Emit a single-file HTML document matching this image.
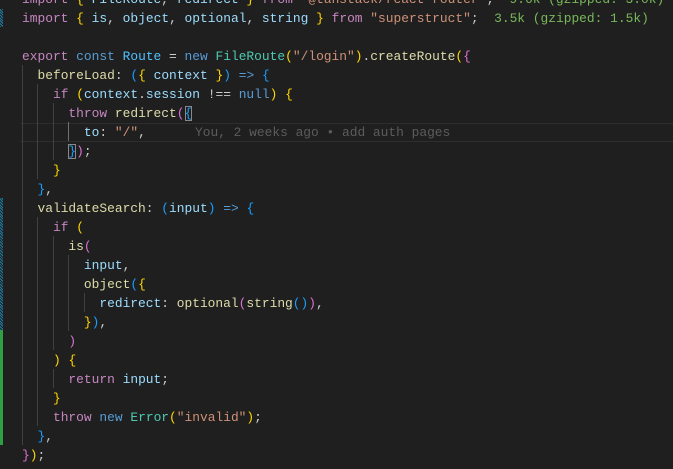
<!DOCTYPE html>
<html><head><meta charset="utf-8"><style>
html,body{margin:0;padding:0;background:#1f1f1f;width:673px;height:469px;overflow:hidden;position:relative}
.c{position:absolute;left:22px;top:-10.5px;font-family:"Liberation Mono",monospace;font-size:12.9px;line-height:19px;color:#cccccc;white-space:pre}
.k{color:#c586c0}.b{color:#569cd6}.t{color:#4ec9b0}.s{color:#ce9178}.f{color:#dcdcaa}.v{color:#9cdcfe}.cv{color:#4fc1ff}
.g1{color:#ffd700}.g2{color:#da70d6}.g3{color:#179fff}.ic{color:#78b85a}.bl{color:#5c5c5c}
.gd{position:absolute;width:1px;background:#404040}
.box{outline:1px solid #888;outline-offset:-1px}
</style></head><body>
<div style="position:absolute;left:20px;right:0;top:123px;height:17px;border-top:1px solid #2e2e2e;border-bottom:1px solid #2e2e2e"></div>
<div style="position:absolute;left:0;width:3px;top:9px;height:18px;background:repeating-linear-gradient(45deg,#1b81a8 0 1px,#1f1f1f 1px 2px)"></div>
<div style="position:absolute;left:0;width:3px;top:198px;height:132px;background:repeating-linear-gradient(45deg,#1b81a8 0 1px,#1f1f1f 1px 2px)"></div>
<div style="position:absolute;left:0;width:3px;top:330px;height:115px;background:#2ea043"></div>
<div class="gd" style="left:22px;top:65px;height:380px"></div>
<div class="gd" style="left:37px;top:84px;height:95px"></div>
<div class="gd" style="left:37px;top:217px;height:209px"></div>
<div class="gd" style="left:53px;top:103px;height:57px"></div>
<div class="gd" style="left:53px;top:236px;height:114px"></div>
<div class="gd" style="left:53px;top:369px;height:19px"></div>
<div class="gd" style="left:68px;top:122px;height:19px;background:#707070"></div>
<div class="gd" style="left:68px;top:255px;height:76px"></div>
<div class="gd" style="left:84px;top:293px;height:19px"></div>
<div class="c"><span class="k">import</span> <span class="g1">{</span> <span class="v">FileRoute</span>, <span class="v">redirect</span> <span class="g1">}</span> <span class="k">from</span> <span class="s">"@tanstack/react-router"</span>;  <span class="ic">9.6k (gzipped: 3.0k)</span>
<span class="k">import</span> <span class="g1">{</span> <span class="v">is</span>, <span class="v">object</span>, <span class="v">optional</span>, <span class="v">string</span> <span class="g1">}</span> <span class="k">from</span> <span class="s">"superstruct"</span>;  <span class="ic">3.5k (gzipped: 1.5k)</span>

<span class="k">export</span> <span class="b">const</span> <span class="cv">Route</span> = <span class="b">new</span> <span class="t">FileRoute</span><span class="g1">(</span><span class="s">"/login"</span><span class="g1">)</span>.<span class="f">createRoute</span><span class="g1">(</span><span class="g2">{</span>
  <span class="f">beforeLoad</span>: <span class="g3">(</span><span class="g1">{</span> <span class="v">context</span> <span class="g1">}</span><span class="g3">)</span> <span class="b">=&gt;</span> <span class="g3">{</span>
    <span class="k">if</span> <span class="g1">(</span><span class="v">context</span>.<span class="v">session</span> !== <span class="b">null</span><span class="g1">)</span> <span class="g1">{</span>
      <span class="k">throw</span> <span class="f">redirect</span><span class="g2">(</span><span class="g3 box">{</span>
        <span class="v">to</span>: <span class="s">"/"</span>,
      <span class="g3 box">}</span><span class="g2">)</span>;
    <span class="g1">}</span>
  <span class="g3">}</span>,
  <span class="f">validateSearch</span>: <span class="g3">(</span><span class="v">input</span><span class="g3">)</span> <span class="b">=&gt;</span> <span class="g3">{</span>
    <span class="k">if</span> <span class="g1">(</span>
      <span class="f">is</span><span class="g2">(</span>
        <span class="v">input</span>,
        <span class="f">object</span><span class="g3">(</span><span class="g1">{</span>
          <span class="v">redirect</span>: <span class="f">optional</span><span class="g2">(</span><span class="f">string</span><span class="g3">()</span><span class="g2">)</span>,
        <span class="g1">}</span><span class="g3">)</span>,
      <span class="g2">)</span>
    <span class="g1">)</span> <span class="g1">{</span>
      <span class="k">return</span> <span class="v">input</span>;
    <span class="g1">}</span>
    <span class="k">throw</span> <span class="b">new</span> <span class="t">Error</span><span class="g1">(</span><span class="s">"invalid"</span><span class="g1">)</span>;
  <span class="g3">}</span>,
<span class="g2">}</span><span class="g1">)</span>;</div>
<div class="c bl" style="left:195px;top:122.5px">You, 2 weeks ago • add auth pages</div>
</body></html>
